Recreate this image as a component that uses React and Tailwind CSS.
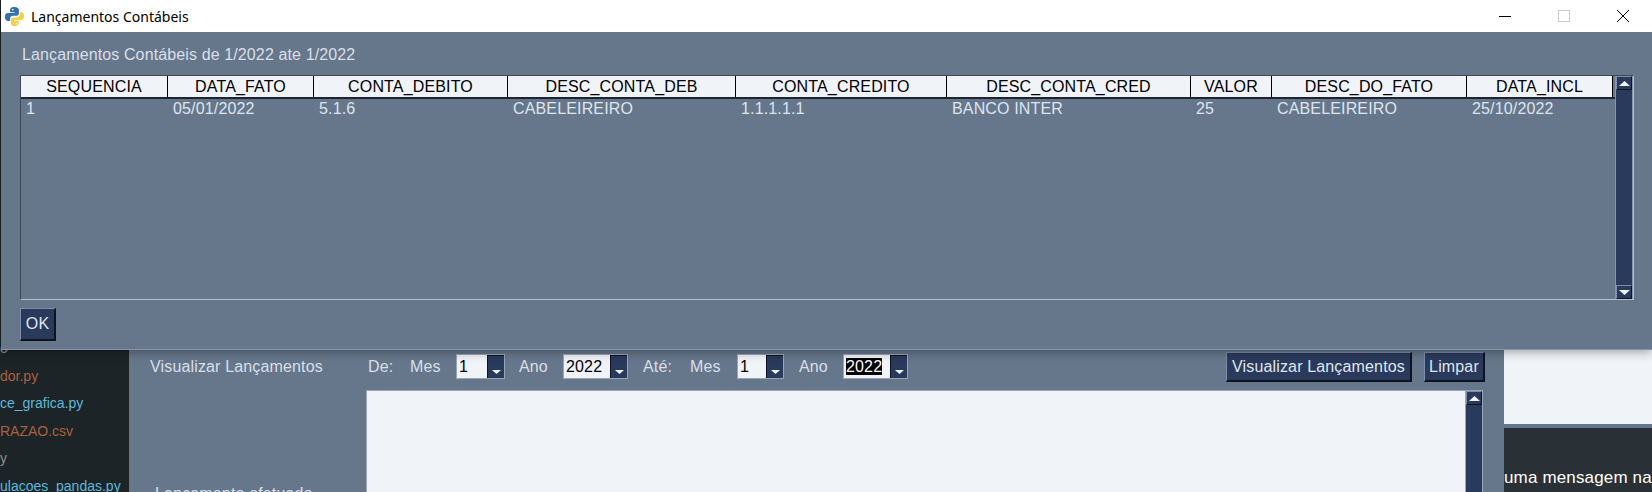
const columns = [
  { name: 'SEQUENCIA', value: '1', width: 'w-[147px]' },
  { name: 'DATA_FATO', value: '05/01/2022', width: 'w-[146px]' },
  { name: 'CONTA_DEBITO', value: '5.1.6', width: 'w-[194px]' },
  { name: 'DESC_CONTA_DEB', value: 'CABELEIREIRO', width: 'w-[228px]' },
  { name: 'CONTA_CREDITO', value: '1.1.1.1.1', width: 'w-[211px]' },
  { name: 'DESC_CONTA_CRED', value: 'BANCO INTER', width: 'w-[244px]' },
  { name: 'VALOR', value: '25', width: 'w-[81px]' },
  { name: 'DESC_DO_FATO', value: 'CABELEIREIRO', width: 'w-[195px]' },
  { name: 'DATA_INCL', value: '25/10/2022', width: 'w-[146px]' },
]

const files = [
  { name: 'o', color: 'text-[#8a8f92]' },
  { name: 'dor.py', color: 'text-[#a9603f]' },
  { name: 'ce_grafica.py', color: 'text-[#5fb8d8]' },
  { name: 'RAZAO.csv', color: 'text-[#a9603f]' },
  { name: 'y', color: 'text-[#8a8f92]' },
  { name: 'ulacoes_pandas.py', color: 'text-[#5fb8d8]' },
]

function PythonIcon() {
  return (
    <svg viewBox="0 0 24 24" className="w-[21px] h-[21px] shrink-0">
      <path
        fill="#3572a5"
        d="M11.8 1C7.6 1 7 2.800 7 4.500V7h5.200v1H4.500C2.400 8 1 9.800 1 12.500S2.400 17 4.500 17H7v-2.800C7 12 8.700 11 10.500 11h4c1.500 0 2.500-1 2.500-2.500v-4C17 2.500 15.500 1 11.800 1z"
      />
      <path
        fill="#f7cf47"
        d="M12.200 23c4.200 0 4.800-1.800 4.800-3.500V17h-5.200v-1h7.700c2.100 0 3.500-1.800 3.500-4.500S21.600 7 19.500 7H18v2.800C18 12 16.300 13 14.500 13h-4C9 13 8 14 8 15.500v4C8 21.500 8.500 23 12.200 23z"
      />
      <circle cx="10" cy="4" r="1" fill="#e8eef5" />
      <circle cx="14.500" cy="20" r="1" fill="#fff" />
    </svg>
  )
}

function ScrollButton({ up }) {
  return (
    <div className="h-[14px] shrink-0 flex items-center justify-center bg-[#2a3a5c] border border-t-[#7f8ea6] border-l-[#7f8ea6] border-b-[#0d1320] border-r-[#0d1320]">
      <svg viewBox="0 0 11 5" className="w-[11px] h-[5px]">
        <path fill="#f1f4f8" d={up ? 'M5.500 0L11 5H0z' : 'M0 0h11L5.500 5z'} />
      </svg>
    </div>
  )
}

function Spinbox({ value, width, selected }) {
  return (
    <div className={`h-[25px] mb-[2px] flex border border-[#9aa5b5] bg-[#f0f3f8] ${width}`}>
      <div className="flex-1 pl-[2px] text-[16px] leading-[23px] text-black">
        <span className={selected ? 'bg-black text-white' : ''}>{value}</span>
      </div>
      <div className="w-[17px] flex items-end justify-center pb-[4px] bg-[#2a3a5c] border-l border-t border-[#0d1320]">
        <svg viewBox="0 0 9 4" className="w-[9px] h-[4px]">
          <path fill="#f1f4f8" d="M0 0h9L4.500 4z" />
        </svg>
      </div>
    </div>
  )
}

function DarkButton({ children, className }) {
  return (
    <button
      type="button"
      className={`bg-[#2a3a5c] text-[#dfe6f0] text-[16px] border-t border-l border-[#7f8ea6] border-r-2 border-b-2 border-r-[#0d1320] border-b-[#0d1320] ${className}`}
    >
      {children}
    </button>
  )
}

export default function App() {
  return (
    <div
      className="relative w-[1652px] h-[492px] overflow-hidden bg-[#f0f3f8] text-[16px] tracking-[0.15px]"
      style={{ fontFamily: '"Liberation Sans", Arial, sans-serif' }}
    >
      {/* app behind the dialog */}
      <div className="flex h-full">
        <div className="w-[129px] shrink-0 bg-[#1c2428] pt-[338px] flex flex-col gap-[7.5px] overflow-hidden tracking-normal">
          {files.map((f) => (
            <div key={f.name} className={`h-[20px] leading-[20px] text-[14px] whitespace-nowrap ${f.color}`}>
              {f.name}
            </div>
          ))}
        </div>

        <div className="w-[1375px] shrink-0 bg-[#66778c] pt-[352px] pr-[19px] text-[#d9dfe8]">
          <div className="flex items-center h-[30px]">
            <span className="ml-[21px] w-[218px]">Visualizar Lançamentos</span>
            <span className="w-[42px]">De:</span>
            <span className="w-[46px]">Mes</span>
            <Spinbox value="1" width="w-[49px]" />
            <span className="ml-[14px] w-[44px]">Ano</span>
            <Spinbox value="2022" width="w-[65px]" />
            <span className="ml-[15px] w-[47px]">Até:</span>
            <span className="w-[47px]">Mes</span>
            <Spinbox value="1" width="w-[47px]" />
            <span className="ml-[15px] w-[44px]">Ano</span>
            <Spinbox value="2022" width="w-[65px]" selected />
            <DarkButton className="ml-auto w-[186px] h-[30px]">Visualizar Lançamentos</DarkButton>
            <DarkButton className="ml-[12px] w-[61px] h-[30px]">Limpar</DarkButton>
          </div>
          <div className="flex mt-[8px]">
            <div className="w-[237px] pt-[92px] pl-[26px] whitespace-nowrap">Lançamento efetuado</div>
            <div className="w-[1099px] h-[110px] bg-[#f0f3f8] border-t border-l border-[#9aa5b5]" />
            <div className="w-[18px] h-[110px] flex flex-col border border-[#9aa5b5] bg-[#2a3a5c]">
              <ScrollButton up />
            </div>
          </div>
        </div>

        <div className="flex-1 flex flex-col">
          <div className="h-[424px] bg-[#f0f3f8]" />
          <div className="h-[4px] bg-[#66778c]" />
          <div className="flex-1 bg-[#2a3136] pt-[37px] text-white text-[17px] whitespace-nowrap overflow-hidden">
            uma mensagem na
          </div>
        </div>
      </div>

      {/* dialog window */}
      <div className="absolute left-[1px] top-0 w-[1651px] h-[350px] flex flex-col shadow-[0_2px_10px_rgba(0,0,0,0.35)]">
        <div className="h-[32px] shrink-0 bg-white flex items-center pl-[3px] text-black">
          <PythonIcon />
          <span className="ml-[6px] text-[14px] tracking-normal" style={{ fontFamily: '"Noto Sans", sans-serif' }}>
            Lançamentos Contábeis
          </span>
          <div className="ml-auto flex items-center h-full">
            <div className="w-[59px] flex justify-center">
              <div className="w-[12px] h-[1px] bg-black" />
            </div>
            <div className="w-[59px] flex justify-center">
              <div className="w-[12px] h-[12px] border border-[#cccccc]" />
            </div>
            <div className="w-[59px] flex justify-center">
              <svg viewBox="0 0 12 12" className="w-[12px] h-[12px]">
                <path d="M0 0L12 12M12 0L0 12" stroke="#000" strokeWidth="1" fill="none" />
              </svg>
            </div>
          </div>
        </div>

        <div className="flex-1 bg-[#66778c] pl-[19px] pt-[14px] flex flex-col border-b border-[#8794a7] text-[#d9dfe8]">
          <div className="h-[18px] pl-[2px] text-[16px] leading-[18px] tracking-[0.12px]">
            Lançamentos Contábeis de 1/2022 ate 1/2022
          </div>
          <div className="mt-[11px] w-[1614px] h-[225px] flex border border-t-[#3d4859] border-l-[#3d4859] border-b-[#b4bdca] border-r-[#b4bdca]">
            <div className="w-[1594px] shrink-0">
              <div className="flex h-[23px] border-b-2 border-[#1d2533]">
                {columns.map((c) => (
                  <div
                    key={c.name}
                    className={`${c.width} shrink-0 bg-[#f0f3f8] border-r border-black text-black text-center leading-[21px] text-[16px]`}
                  >
                    {c.name}
                  </div>
                ))}
              </div>
              <div className="flex">
                {columns.map((c) => (
                  <div key={c.name} className={`${c.width} shrink-0 pl-[5px] leading-[20px] text-[16px] text-[#dfe4ec]`}>
                    {c.value}
                  </div>
                ))}
              </div>
            </div>
            <div className="w-[18px] flex flex-col bg-[#2a3a5c] border-x border-[#8794a7]">
              <ScrollButton up />
              <div className="flex-1" />
              <ScrollButton />
            </div>
          </div>
          <DarkButton className="mt-[8px] w-[36px] h-[33px]">OK</DarkButton>
        </div>
      </div>
    </div>
  )
}
